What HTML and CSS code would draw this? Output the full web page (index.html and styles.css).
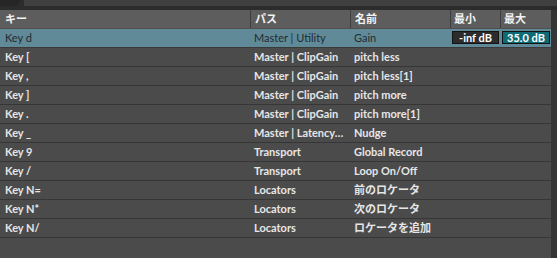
FILE: index.html
```html
<!DOCTYPE html>
<html lang="ja">
<head>
<meta charset="utf-8">
<link rel="stylesheet" href="styles.css">
</head>
<body>
<div class="topbar">
  <div class="knob"></div>
  <div class="tabpanel"></div>
</div>
<div class="frame">
  <div class="table">
    <div class="row head">
      <div class="cell">キー</div>
      <div class="cell">パス</div>
      <div class="cell">名前</div>
      <div class="cell">最小</div>
      <div class="cell">最大</div>
    </div>
    <div class="row sel">
      <div class="cell">Key d</div>
      <div class="cell">Master | Utility</div>
      <div class="cell">Gain</div>
      <div class="cell val"><span class="box minbox">-inf dB</span></div>
      <div class="cell val"><span class="box maxbox">35.0 dB</span></div>
    </div>
    <div class="row"><div class="cell">Key [</div><div class="cell">Master | ClipGain</div><div class="cell">pitch less</div><div class="cell"></div><div class="cell"></div></div>
    <div class="row"><div class="cell">Key ,</div><div class="cell">Master | ClipGain</div><div class="cell">pitch less[1]</div><div class="cell"></div><div class="cell"></div></div>
    <div class="row"><div class="cell">Key ]</div><div class="cell">Master | ClipGain</div><div class="cell">pitch more</div><div class="cell"></div><div class="cell"></div></div>
    <div class="row"><div class="cell">Key .</div><div class="cell">Master | ClipGain</div><div class="cell">pitch more[1]</div><div class="cell"></div><div class="cell"></div></div>
    <div class="row"><div class="cell">Key _</div><div class="cell">Master | Latency…</div><div class="cell">Nudge</div><div class="cell"></div><div class="cell"></div></div>
    <div class="row"><div class="cell">Key 9</div><div class="cell">Transport</div><div class="cell">Global Record</div><div class="cell"></div><div class="cell"></div></div>
    <div class="row"><div class="cell">Key /</div><div class="cell">Transport</div><div class="cell">Loop On/Off</div><div class="cell"></div><div class="cell"></div></div>
    <div class="row"><div class="cell">Key N=</div><div class="cell">Locators</div><div class="cell">前のロケータ</div><div class="cell"></div><div class="cell"></div></div>
    <div class="row"><div class="cell">Key N*</div><div class="cell">Locators</div><div class="cell">次のロケータ</div><div class="cell"></div><div class="cell"></div></div>
    <div class="row"><div class="cell">Key N/</div><div class="cell">Locators</div><div class="cell">ロケータを追加</div><div class="cell"></div><div class="cell"></div></div>
    <div class="fill"></div>
  </div>
  <div class="gutter"></div>
</div>
</body>
</html>
```

FILE: styles.css
```css
html, body {
  margin: 0;
  padding: 0;
  background: #2e2e2e;
  width: 557px;
  height: 258px;
  overflow: hidden;
  font-family: Lato, "Liberation Sans", "Noto Sans CJK JP", sans-serif;
  font-size: 11px;
}
.topbar {
  display: flex;
  height: 10px;
  background: #2c2c2c;
}
.knob {
  width: 20px;
  height: 6px;
  background: #262626;
  border-bottom-right-radius: 6px;
}
.tabpanel {
  margin-left: 4px;
  flex: 1;
  height: 6px;
  background: #404040;
}
.frame {
  display: flex;
  height: 248px;
}
.table {
  width: 551px;
  display: flex;
  flex-direction: column;
  background: #4b4b4b;
}
.gutter {
  flex: 1;
  background: #353535;
}
.row {
  display: grid;
  grid-template-columns: 250px 100px 100px 50px 51px;
  height: 18px;
  border-bottom: 1px solid #363636;
  color: #e6e6e6;
  font-weight: 700;
}
.cell {
  display: flex;
  align-items: center;
  padding-left: 5px;
  white-space: nowrap;
  overflow: hidden;
  line-height: 18px;
}
.row .cell:nth-child(2) { padding-left: 4px; }
.row .cell:nth-child(3) { padding-left: 4px; }
.head {
  background: #5d5d5d;
  color: #f2f2f2;
  border-bottom: 1px solid #4f4f4f;
}
.head .cell + .cell {
  border-left: 1px solid #3e3e3e;
}
.head .cell:nth-child(4), .head .cell:nth-child(5) { padding-left: 3px; }
.sel {
  background: #618a98;
  color: #1f2c33;
  font-weight: 400;
  border-bottom-color: #3a3a3a;
}
.cell.val {
  padding-left: 2px;
  align-items: flex-start;
  padding-top: 2px;
}
.box {
  display: block;
  box-sizing: border-box;
  height: 13px;
  line-height: 11px;
  text-align: center;
  color: #ffffff;
  border: 1px solid #141414;
  font-weight: 700;
  font-size: 11px;
}
.minbox {
  width: 47px;
  background: #2c2c2c;
}
.maxbox {
  width: 48px;
  background: #0d6b76;
}
.fill {
  flex: 1;
}
```
